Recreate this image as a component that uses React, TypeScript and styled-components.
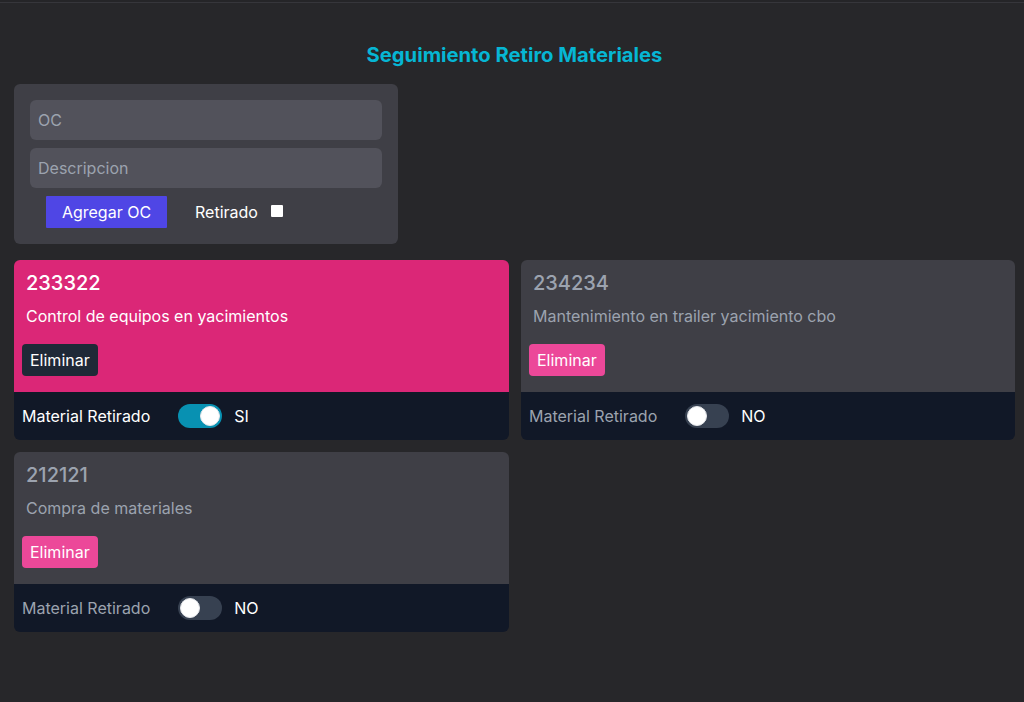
import React, { useState } from "react";
import styled, { createGlobalStyle } from "styled-components";

const Global = createGlobalStyle`
  html, body { margin: 0; padding: 0; background: #27272a; }
  body { font-family: Inter, "Noto Sans", sans-serif; color: #fff; }
  * { box-sizing: border-box; }
`;

const Page = styled.div`
  min-height: 702px;
  background: #27272a;
  border-top: 2px solid #252528;
  box-shadow: inset 0 1px 0 #36363b;
  padding: 0 9px 40px 14px;
`;

const Title = styled.h1`
  margin: 0;
  padding: 40px 0 16px;
  text-align: center;
  color: #06b6d4;
  font-size: 20.2px;
  line-height: 26px;
  font-weight: 700;
`;

const Form = styled.div`
  width: 384px;
  background: #3f3f46;
  border-radius: 6px;
  padding: 16px;
  display: flex;
  flex-direction: column;
  gap: 8px;
`;

const Input = styled.input`
  height: 40px;
  border: none;
  border-radius: 6px;
  background: #52525b;
  padding: 0 8px;
  font-family: inherit;
  font-size: 16px;
  color: #fff;
  outline: none;
  &::placeholder { color: #9ca3af; }
`;

const FormRow = styled.div`
  display: flex;
  align-items: center;
  padding-left: 16px;
  gap: 28px;
`;

const AddButton = styled.button`
  height: 32px;
  width: 121px;
  padding: 0;
  white-space: nowrap;
  border: none;
  border-radius: 1px;
  background: #4f46e5;
  color: #fff;
  font-family: inherit;
  font-size: 16px;
`;

const CheckLabel = styled.label`
  display: flex;
  align-items: center;
  gap: 13px;
  font-size: 16px;
  color: #fff;
`;

const Check = styled.span`
  width: 12px;
  height: 12px;
  background: #fff;
  border-radius: 1px;
  margin-top: -2px;
`;

const Grid = styled.div`
  margin-top: 16px;
  display: grid;
  grid-template-columns: 495px 494px;
  gap: 12px;
`;

const Card = styled.div`
  border-radius: 6px;
  overflow: hidden;
  display: flex;
  flex-direction: column;
`;

const CardTop = styled.div<{ $active: boolean }>`
  background: ${(p) => (p.$active ? "#db2777" : "#3f3f46")};
  color: ${(p) => (p.$active ? "#fff" : "#9ca3af")};
  height: 132px;
  padding: 11px 8px 0;
`;

const Number = styled.div`
  font-size: 20px;
  line-height: 24px;
  padding: 0 4px;
  font-weight: 500;
`;

const Desc = styled.div`
  font-size: 16px;
  line-height: 20px;
  padding: 0 4px;
  margin-top: 11px;
`;

const DelButton = styled.button<{ $active: boolean }>`
  margin-top: 18px;
  height: 32px;
  padding: 0 8px;
  border: none;
  border-radius: 4px;
  background: ${(p) => (p.$active ? "#1f2937" : "#ec4899")};
  color: #fff;
  font-family: inherit;
  font-size: 16px;
`;

const Footer = styled.div<{ $active: boolean }>`
  background: #111827;
  height: 48px;
  display: flex;
  align-items: center;
  padding: 0 8px;
  font-size: 16px;
  color: ${(p) => (p.$active ? "#fff" : "#9ca3af")};
`;

const Toggle = styled.span<{ $on: boolean }>`
  margin-left: 28px;
  width: 44px;
  height: 24px;
  border-radius: 12px;
  background: ${(p) => (p.$on ? "#0891b2" : "#374151")};
  display: flex;
  align-items: center;
  padding: 2px;
  justify-content: ${(p) => (p.$on ? "flex-end" : "flex-start")};
`;

const Knob = styled.span`
  width: 20px;
  height: 20px;
  border-radius: 50%;
  background: #fff;
  border: 1px solid #e5e7eb;
`;

const State = styled.span`
  margin-left: 12px;
  color: #fff;
  font-size: 16px;
`;

const items = [
  { oc: "233322", desc: "Control de equipos en yacimientos", done: true },
  { oc: "234234", desc: "Mantenimiento en trailer yacimiento cbo", done: false },
  { oc: "212121", desc: "Compra de materiales", done: false },
];

export default function App() {
  const [list] = useState(items);
  return (
    <>
      <Global />
      <Page>
        <Title>Seguimiento Retiro Materiales</Title>
        <Form>
          <Input placeholder="OC" />
          <Input placeholder="Descripcion" />
          <FormRow>
            <AddButton>Agregar OC</AddButton>
            <CheckLabel>
              Retirado <Check />
            </CheckLabel>
          </FormRow>
        </Form>
        <Grid>
          {list.map((it) => (
            <Card key={it.oc}>
              <CardTop $active={it.done}>
                <Number>{it.oc}</Number>
                <Desc>{it.desc}</Desc>
                <DelButton $active={it.done}>Eliminar</DelButton>
              </CardTop>
              <Footer $active={it.done}>
                Material Retirado
                <Toggle $on={it.done}>
                  <Knob />
                </Toggle>
                <State>{it.done ? "SI" : "NO"}</State>
              </Footer>
            </Card>
          ))}
        </Grid>
      </Page>
    </>
  );
}
